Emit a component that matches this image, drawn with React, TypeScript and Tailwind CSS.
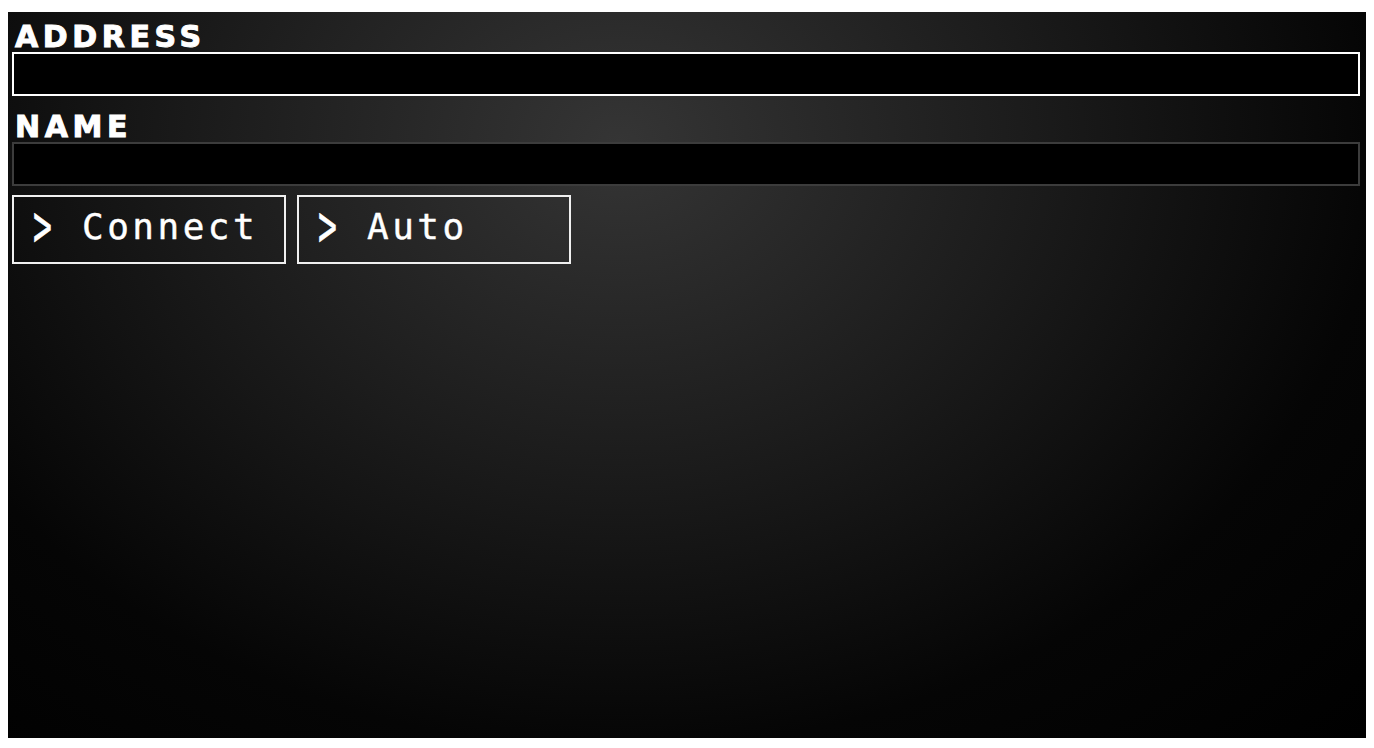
export default function App() {
  const labelFont = { fontFamily: '"DejaVu Sans", "Liberation Sans", sans-serif' };
  const monoFont = { fontFamily: '"DejaVu Sans Mono", "Liberation Mono", monospace' };

  return (
    <div className="min-h-screen bg-white px-2 pt-3 pb-[10px]">
      <div className="flex h-[726px] flex-col bg-[radial-gradient(ellipse_at_45%_18%,#353535_0%,#1c1c1c_38%,#050505_72%,#000_100%)] pl-1 pr-[6px]">
        <label
          style={labelFont}
          className="block h-[40px] pl-[3px] pt-[10px] text-[30px] font-bold uppercase leading-none tracking-[4.6px] text-white [-webkit-text-stroke:1px_white]"
        >
          ADDRESS
        </label>
        <input className="h-[44px] w-full border-2 border-white bg-black outline-none" />

        <label
          style={labelFont}
          className="mt-[6px] block h-[40px] pl-[3px] pt-[10px] text-[30px] font-bold uppercase leading-none tracking-[4.6px] text-white [-webkit-text-stroke:1px_white]"
        >
          NAME
        </label>
        <input className="h-[44px] w-full border-2 border-[#3c3c3c] bg-black outline-none" />

        <div className="mt-[9px] flex gap-[11px]">
          {["Connect", "Auto"].map((t) => (
            <button
              key={t}
              style={monoFont}
              className="flex h-[69px] w-[274px] items-center border-2 border-[#f0f0f0] bg-transparent pb-[5px] pl-[19px] text-left leading-none text-white"
            >
              <span className="inline-block w-[49px] origin-left scale-x-[0.58] scale-y-[1.08] text-[54px] leading-none [-webkit-text-stroke:0.6px_white]">&gt;</span>
              <span className="text-[36px] leading-none tracking-[3.5px] [-webkit-text-stroke:0.4px_white]">{t}</span>
            </button>
          ))}
        </div>
      </div>
    </div>
  );
}
